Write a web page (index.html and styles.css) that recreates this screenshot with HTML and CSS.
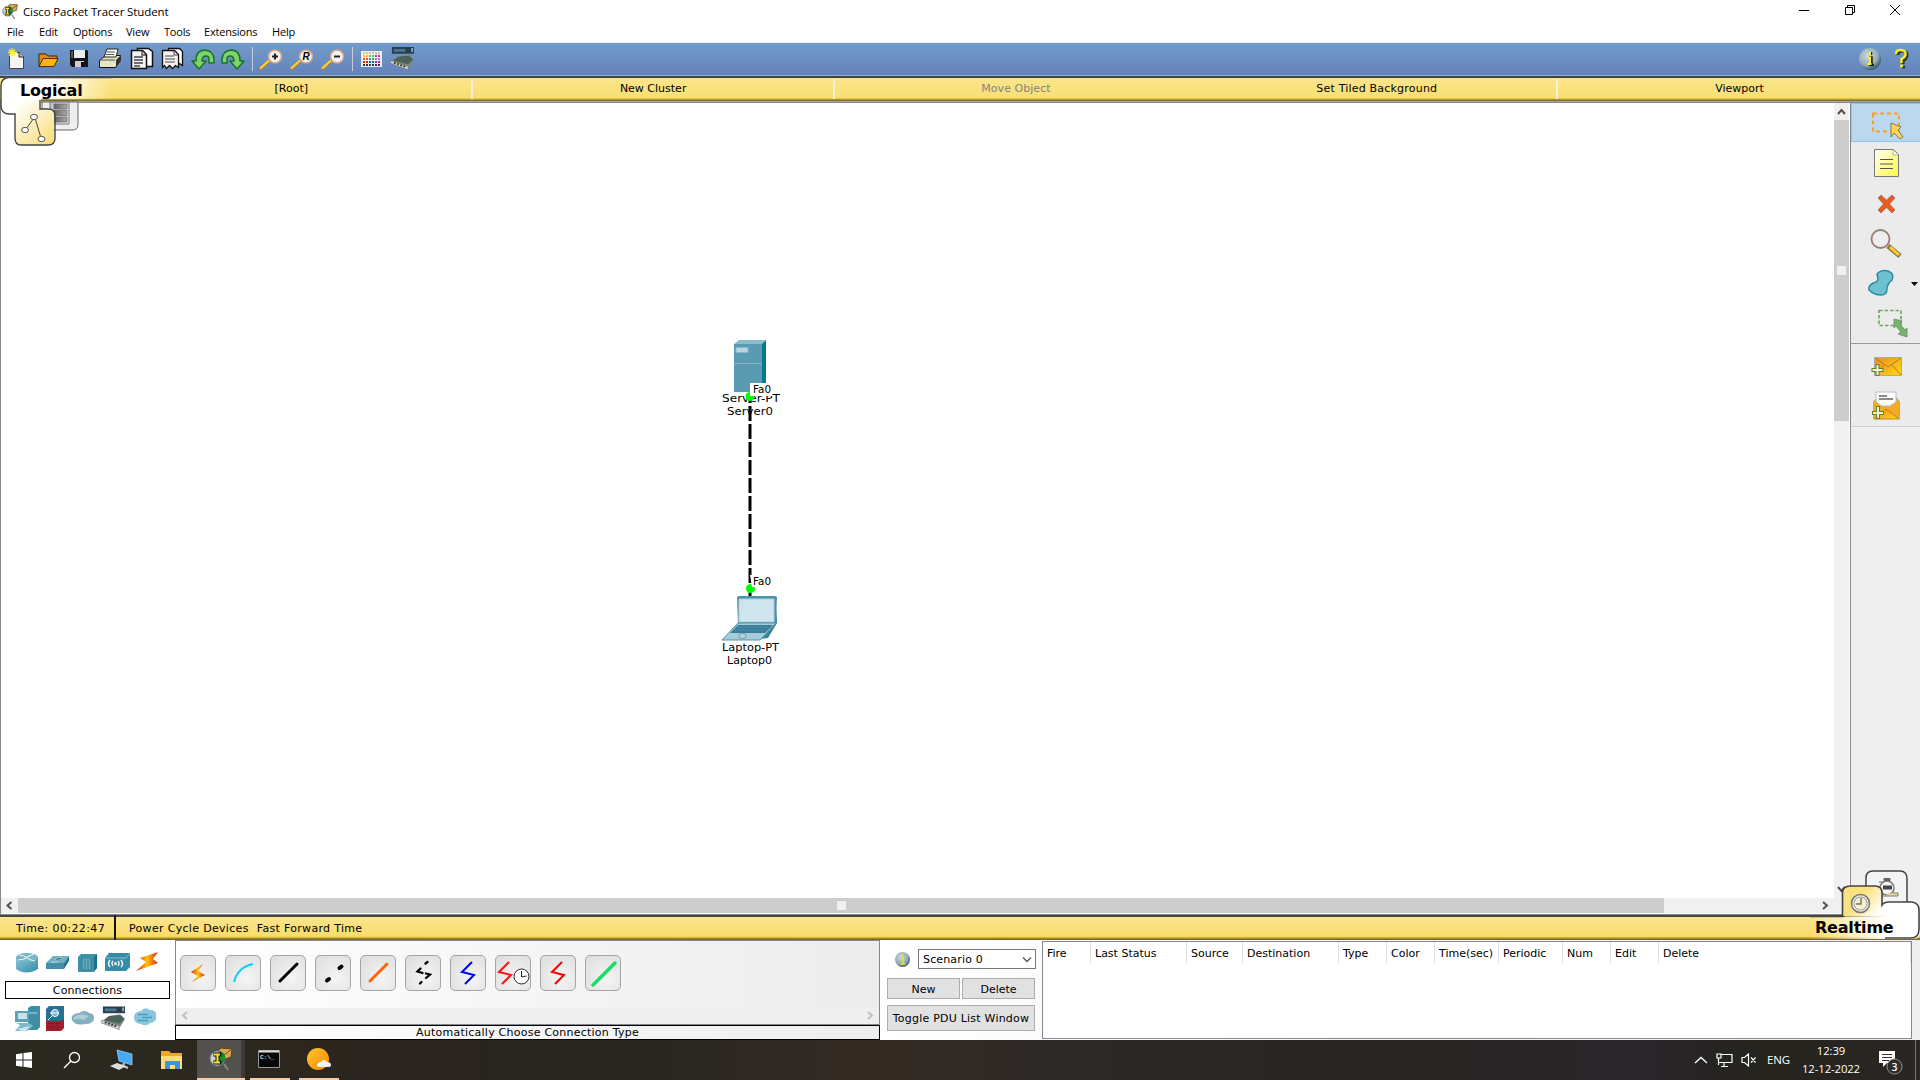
FILE: index.html
```html
<!DOCTYPE html>
<html lang="en">
<head>
<meta charset="utf-8">
<title>Cisco Packet Tracer Student</title>
<link rel="stylesheet" href="styles.css">
</head>
<body>
<svg class="defs" width="0" height="0" aria-hidden="true">
  <defs>
    <linearGradient id="teal" x1="0" y1="0" x2="1" y2="1"><stop offset="0" stop-color="#8fc6d6"/><stop offset="1" stop-color="#2f8ba6"/></linearGradient>
    <linearGradient id="bolt" x1="0" y1="0" x2="1" y2="0"><stop offset="0" stop-color="#d8211a"/><stop offset=".5" stop-color="#ffc400"/><stop offset="1" stop-color="#e02617"/></linearGradient>
    <linearGradient id="gold" x1="0" y1="0" x2="1" y2="1"><stop offset="0" stop-color="#f08c1e"/><stop offset="1" stop-color="#ffd815"/></linearGradient>
    <linearGradient id="paper" x1="0" y1="0" x2="1" y2="1"><stop offset="0" stop-color="#fff"/><stop offset="1" stop-color="#fff93a"/></linearGradient>
    <linearGradient id="tabfade" x1="0" y1="0" x2="1" y2="0"><stop offset="0" stop-color="#fff"/><stop offset=".45" stop-color="#fff"/><stop offset="1" stop-color="#fff" stop-opacity="0"/></linearGradient>
    <linearGradient id="tabcorner" x1="0.2" y1="0" x2="0.9" y2="1"><stop offset="0" stop-color="#fff"/><stop offset=".75" stop-color="#fae79a"/><stop offset="1" stop-color="#f9df76"/></linearGradient>
    <linearGradient id="clockfade" x1="0" y1="0.2" x2="1" y2="0.8"><stop offset="0" stop-color="#f9e27f"/><stop offset=".4" stop-color="#f9e27f"/><stop offset="1" stop-color="#fff"/></linearGradient>
    <linearGradient id="rtfade" x1="0" y1="0" x2="1" y2="0"><stop offset="0" stop-color="#fff" stop-opacity="0"/><stop offset=".7" stop-color="#fff"/></linearGradient>
    <linearGradient id="greyfade" x1="0" y1="0" x2="1" y2="1"><stop offset="0" stop-color="#bdbdbd"/><stop offset="1" stop-color="#eee"/></linearGradient>
    <linearGradient id="rack" x1="0" y1="0" x2="1" y2="0"><stop offset="0" stop-color="#666"/><stop offset="1" stop-color="#aaa"/></linearGradient>
    <radialGradient id="ball" cx=".4" cy=".35" r=".7"><stop offset="0" stop-color="#cdd9de"/><stop offset=".65" stop-color="#94aab4"/><stop offset="1" stop-color="#224a5c"/></radialGradient>
    <linearGradient id="sun" x1="0" y1="0" x2="1" y2="1"><stop offset="0" stop-color="#ffc62c"/><stop offset="1" stop-color="#f98900"/></linearGradient>
    <symbol id="module" viewBox="0 0 26 25"><path d="M2 0h23v7H2z" fill="#293d4c"/><path d="M4 2h12v3H4z" fill="#4a7892"/><path d="M22 1h2v4h-2z" fill="#8ab"/><path d="M8 10l12-2 5 5-5 8-19-5z" fill="#7c8c82"/><path d="M9 10l11-1 4 4-5 5-16-4z" fill="#4b6258"/><path d="M1 14l18 6v4L0 17z" fill="#cdd0cc" stroke="#666" stroke-width=".6"/><path d="M4 16.500l12 4" stroke="#3b3b2d" stroke-width="2" stroke-dasharray="2 1.500"/></symbol>
    <symbol id="undo" viewBox="0 0 31 33"><path d="M5 18h4q0-11 9-11 9 1 9 10v3h-5v-4q0-3-3-3-4 0-4 5h4l-7 8z" fill="#7fd36a" stroke="#157526" stroke-width="1.500" stroke-linejoin="round"/></symbol>
    <symbol id="lens" viewBox="0 0 31 33"><path d="M4 26L13 18" stroke="#b9862f" stroke-width="3.500"/><path d="M4 25.500L13 17.500" stroke="#ffd338" stroke-width="2"/><circle cx="19" cy="13.500" r="6.500" fill="#f2f2f2" stroke="#d8a488" stroke-width="1.600"/></symbol>
    <symbol id="tracer" viewBox="0 0 24 24"><path d="M8 5l4-4 11 1-1 8-8 3z" fill="#d9a64c" stroke="#5d421b"/><path d="M9 4l6 4 8-6" fill="none" stroke="#6f4d1d"/><path d="M15 17l4 6" stroke="#888" stroke-width="2"/><circle cx="8.500" cy="11.500" r="7.500" fill="#c6ceca" stroke="#777"/><path d="M10 4a7 7 0 0 1 4 12l-5 2z" fill="#178a36"/><path d="M4.500 7.500h8M8.500 7v9M4.500 15.500h8" stroke="#111" stroke-width="4"/><path d="M5 7.500h6M8.500 7v9M5 15.500h6" stroke="#ffe51b" stroke-width="2"/></symbol>
  </defs>
</svg>
<div class="window">
  <header class="titlebar">
    <svg class="appicon" width="16" height="17" viewBox="0 0 24 24"><use href="#tracer"/></svg>
    <span class="ui title">Cisco Packet Tracer Student</span>
    <div class="winctl">
      <svg width="12" height="12"><path d="M1 6.500h10" stroke="#000"/></svg>
      <svg width="12" height="12"><path d="M1.500 3.500h7v7h-7zM3.500 3V1.500h7v7H9" fill="none" stroke="#000"/></svg>
      <svg width="12" height="12"><path d="M1 1l10 10M11 1L1 11" stroke="#000"/></svg>
    </div>
  </header>
  <nav class="menu ui">
    <span class="m1">File</span><span class="m2">Edit</span><span class="m3">Options</span><span class="m4">View</span><span class="m5">Tools</span><span class="m6">Extensions</span><span class="m7">Help</span>
  </nav>
  <div class="toolbar">
    <svg viewBox="0 0 31 33"><path d="M8.500 9.500h10l4 4v12h-14z" fill="#f4f4f4" stroke="#444"/><path d="M18 9v5h5" fill="#bbb" stroke="#222"/><path d="M11 5v9M7 9.500h9M8 6.500l6 6M14 6.500l-6 6" stroke="#fff02e" stroke-width="1.300"/></svg>
    <svg viewBox="0 0 31 33"><path d="M7 23V11h7l2 2h9v4" fill="#e58a0e" stroke="#3e2504"/><path d="M7 23.500l4-8h15l-4 8z" fill="#ffb01f" stroke="#4a2d02"/></svg>
    <svg viewBox="0 0 31 33"><path d="M7 7h17l1 1v16H9l-2-2z" fill="#151515"/><path d="M11 7h11v8H11z" fill="#e8edef"/><path d="M12 18h9v6h-9z" fill="#ccd"/><path d="M18 19h3v5h-3z" fill="#111"/><path d="M9 8v7" stroke="#999"/></svg>
    <svg viewBox="0 0 31 33"><path d="M5.500 17.500l6-5h15v5l-5 7h-16z" fill="#e6e6c3" stroke="#111"/><path d="M22 24l5-7v-5l-5 5z" fill="#333"/><path d="M10 14l3-8h11l-2 8z" fill="#fff" stroke="#222"/><path d="M13 9h8M12 11.500h8M5 17h16" stroke="#555"/></svg>
    <svg viewBox="0 0 31 33"><path d="M12.500 5.500h11l4 3v15h-15z" fill="#fff" stroke="#111" stroke-width="1.500"/><path d="M6.500 7.500h11l4 4v14h-15z" fill="#f4f4f4" stroke="#111" stroke-width="1.500"/><path d="M17 8v4h4M9 14h9M9 17h9M9 20h9M9 23h6" fill="none" stroke="#444" stroke-width="1.300"/></svg>
    <svg viewBox="0 0 31 33"><path d="M12.500 5.500h11l3 3v14l-3-2-2 2h-9z" fill="#fff" stroke="#111" stroke-width="1.300"/><path d="M6.500 7.500h12l4 4v13l-3-2-3 3-3-3-3 3-2-3-2 2z" fill="#f4f4f4" stroke="#111" stroke-width="1.300"/><path d="M18 8v4h4M9 13h9M9 16h10M9 19h10" fill="none" stroke="#444"/></svg>
    <svg viewBox="0 0 31 33"><use href="#undo"/></svg>
    <svg viewBox="0 0 31 33"><g transform="translate(31 0) scale(-1 1)"><use href="#undo"/></g></svg>
    <i class="sep"></i>
    <svg viewBox="0 0 31 33"><use href="#lens"/><path d="M16 13.500h6M19 10.500v6" stroke="#222" stroke-width="2"/></svg>
    <svg viewBox="0 0 31 33"><use href="#lens"/><text x="15.600" y="17" font-family="Liberation Sans" font-size="10" font-weight="700" font-style="italic">R</text></svg>
    <svg viewBox="0 0 31 33"><use href="#lens"/><path d="M16 13.500h6" stroke="#222" stroke-width="2"/></svg>
    <i class="sep"></i>
    <svg viewBox="0 0 31 33"><path d="M5 8h21v16H5z" fill="#eee"/><g stroke-width="2" stroke-dasharray="2 1"><path d="M7 10h18" stroke="#d7c8a4"/><path d="M7 13h5" stroke="#efc62f"/><path d="M7 16h5" stroke="#e6623c"/><path d="M7 19h5" stroke="#bb2e2e"/><path d="M7 22h5" stroke="#333"/><path d="M13 13h5" stroke="#71cc45"/><path d="M13 16h5" stroke="#35a5a5"/><path d="M13 19h5" stroke="#3160b7"/><path d="M13 22h5" stroke="#27345b"/><path d="M19 13h6" stroke="#a4d"/><path d="M19 16h6" stroke="#d46ad1"/><path d="M19 19h6" stroke="#863596"/><path d="M19 22h6" stroke="#4a2450"/></g></svg>
    <svg viewBox="0 0 31 33"><use href="#module" x="3" y="4" width="25" height="24"/></svg>
    <div class="help">
      <svg width="24" height="24"><circle cx="12" cy="12" r="11" fill="url(#ball)"/><path d="M13 5v3M11 10.500h2.500v7M11 18h5" stroke="#222" stroke-width="2.500" fill="none"/><path d="M12 5v3M10 10.500h2v7M9.500 17h4" stroke="#f6f22d" stroke-width="2" fill="none"/></svg>
      <svg width="16" height="22"><path d="M4 7q0-4 4-4 6 0 5 5-1 3-4 5v3M8 19h3" stroke="#333" stroke-width="3" fill="none"/><path d="M2 6q0-4 4.500-4 6 0 5 5-1 3-4 4v4M6 18h3" stroke="#f4ee27" stroke-width="2.500" fill="none"/></svg>
    </div>
  </div>
  <div class="navbar v">
    <div class="gap"></div><div class="cell root">[Root]</div><div class="cell">New Cluster</div><div class="cell off">Move Object</div><div class="cell tiled">Set Tiled Background</div><div class="cell last">Viewport</div>
    <svg class="logical" width="112" height="72"><path d="M42 26h36v23q0 5-6 5H42z" fill="#eee" stroke="#666"/><path d="M50 26h19v22H50z" fill="url(#greyfade)" stroke="#777"/><path d="M54 28h13v5H54zM54 34.500h13v5H54zM54 41h13v5H54z" fill="url(#rack)" stroke="#666" stroke-width=".7"/><path d="M1 8q1-6 7-7h104v22H41v9H15v6H7q-5 0-6-6z" fill="url(#tabfade)"/><path d="M15 24h26v9h7q6 0 6 6v23q0 7-6 7H21q-6 0-6-7z" fill="url(#tabcorner)"/><path d="M112 1.500H9Q1 2 1 10v19q0 9 8 9h6v24q0 7 6 7h27q7 0 7-7V39q0-6-7-6h-8v-9" fill="none" stroke="#444" stroke-width="1.400"/><path d="M34 42L26 53M35 42l6 20" stroke="#444"/><g fill="#fff" stroke="#555"><ellipse cx="34" cy="41" rx="3.500" ry="2.700"/><ellipse cx="25" cy="54" rx="3.500" ry="2.700"/><ellipse cx="41.500" cy="63" rx="3.500" ry="2.700"/></g></svg>
    <b class="logicaltext">Logical</b>
  </div>
  <main class="work">
    <section class="canvas">
      <div class="row">
        <div class="sheet">
          <svg class="diagram" width="100" height="360" font-family="Verdana, 'DejaVu Sans', sans-serif" font-size="11">
            <path d="M34 24l5-4h27l-4 4z" fill="#8cbccb"/><path d="M34 24h28v48H34z" fill="#5a9bb1"/><path d="M62 24l4-4v48l-4 4z" fill="#047792"/><path d="M36 27.500h12v5H36z" fill="#b8d5e1" stroke="#8bb8c9"/><path d="M34 43.500h28" stroke="#83b3c4"/>
            <text x="22" y="82" textLength="58" lengthAdjust="spacingAndGlyphs">Server-PT</text><text x="27" y="95" textLength="46" lengthAdjust="spacingAndGlyphs">Server0</text>
            <path d="M50 77v199" stroke="#000" stroke-width="3" stroke-dasharray="15 3" stroke-dashoffset="9"/>
            <circle cx="50" cy="76.500" r="4.500" fill="#0f0"/><path d="M50 63h22v13H50z" fill="#fff"/><text x="53" y="73" font-size="10.500" textLength="18" lengthAdjust="spacingAndGlyphs">Fa0</text>
            <circle cx="50.500" cy="268.500" r="4.500" fill="#0f0"/><path d="M50 255h22v12H52z" fill="#fff"/><text x="53" y="265" font-size="10.500" textLength="18" lengthAdjust="spacingAndGlyphs">Fa0</text>
            <path d="M37 278q0-2 2-2h36q2 0 2 2l-2 25H38z" fill="#4f91a8"/><path d="M76 277l1 26-9 15-7 1 14-16z" fill="#37839c"/><path d="M39 279h35v23H39z" fill="#cee5ee" stroke="#a8cdda"/><path d="M38 303h38l-16 17H22z" fill="#a6ccd8" stroke="#5392a8"/><path d="M38 305h35l-8 8H30z" fill="#397f9a"/><path d="M34 307h34M31 310h34" stroke="#5598ae" stroke-width=".6"/><ellipse cx="42.500" cy="316" rx="3.500" ry="2.500" fill="#b8d6df" stroke="#6e9caa"/>
            <text x="22" y="331" textLength="57" lengthAdjust="spacingAndGlyphs">Laptop-PT</text><text x="27" y="344" textLength="45" lengthAdjust="spacingAndGlyphs">Laptop0</text>
          </svg>
        </div>
        <div class="vscroll"><svg class="up" width="15" height="17"><path d="M4 11l3.500-4 3.500 4" fill="none" stroke="#505050" stroke-width="2"/></svg><div class="vthumb"><i></i></div><svg class="down" width="15" height="17"><path d="M4 6l3.500 4L11 6" fill="none" stroke="#505050" stroke-width="2"/></svg></div>
      </div>
      <div class="hscroll"><svg width="17" height="15"><path d="M10.500 4L6.500 7.500l4 3.500" fill="none" stroke="#505050" stroke-width="2"/></svg><div class="hthumb"><i></i></div><svg class="right" width="17" height="15"><path d="M6 4l4 3.500L6 11" fill="none" stroke="#505050" stroke-width="2"/></svg></div>
    </section>
    <aside class="tools">
      <div class="tool sel"><svg width="67" height="38"><path d="M20 9.500h26v18H20z" fill="none" stroke="#f9a11b" stroke-width="2" stroke-dasharray="4 3"/><path d="M38 19l10 4-3 3 5 7-3 2-6-6-3 4z" fill="#ffd848" stroke="#777"/></svg></div>
      <div class="tool"><svg width="67" height="39"><path d="M22.500 7.500h19l5 5v22h-24z" fill="url(#paper)" stroke="#777"/><path d="M41 8v5h5" fill="#fff" stroke="#aaa"/><path d="M28 17.500h13M28 22h13M28 26.500h13" stroke="#555"/></svg></div>
      <div class="tool"><svg width="67" height="40"><path d="M29 13l5.500 5 5.500-5 3 3-5.500 6 5.500 6-3 3-5.500-5.500L29 31l-3-3 5.500-6-5.500-6z" fill="#ed5b1c" stroke="#aa7b66"/></svg></div>
      <div class="tool"><svg width="67" height="40"><path d="M36 24l12 10" stroke="#8c7543" stroke-width="5"/><path d="M38 25l9 8" stroke="#ffd028" stroke-width="3"/><circle cx="28.500" cy="17" r="9" fill="#ededed" stroke="#987e72" stroke-width="1.800"/></svg></div>
      <div class="tool"><svg width="67" height="40"><path d="M25 11q4-5 11-3 7 3 4 9-5 4-5 9 0 6-6 6-7 0-12-5-1-4 4-7 5-1 5-4z" fill="#6fc1d1" stroke="#2d8ca0" stroke-width="1.500"/><path d="M59 19h7l-3.500 4z"/></svg></div>
      <div class="tool"><svg width="67" height="39"><path d="M27 6.500h22v15H27z" fill="none" stroke="#6baa5d" stroke-width="1.700" stroke-dasharray="3.500 2"/><path d="M42 15l8 2-2 3 5 6 2-2v9l-9-3 3-2-5-6-2 2z" fill="#74b46d" stroke="#789274"/></svg></div>
      <div class="tool line"><svg width="67" height="41"><path d="M22.500 13.500h27v18h-27z" fill="url(#gold)" stroke="#aaa"/><path d="M23 14l13 9 13-9M23 31l9-10M49 31l-9-10" fill="none" stroke="#b07b21"/><path d="M25.500 20v12M19.500 26h12" stroke="#6d7a2a" stroke-width="4"/><path d="M25.500 21v10M20.500 26h10" stroke="#ecf5cc" stroke-width="2"/></svg></div>
      <div class="tool end"><svg width="67" height="41"><path d="M21.500 16.500l6-6h15l5 6v17h-26z" fill="#f4aa22" stroke="#aaa"/><path d="M24 7h20v10l-6 4h-8l-6-4z" fill="#fff" stroke="#bbb"/><path d="M27 11h8M27 14h14" stroke="#888" stroke-width="2"/><path d="M34 24l-12 10h25z" fill="url(#gold)" stroke="#c58326"/><path d="M26 21v13M20 28h12" stroke="#6d7a2a" stroke-width="4"/><path d="M26 22v11M21 28h10" stroke="#ecf5cc" stroke-width="2"/></svg></div>
    </aside>
  </main>
  <div class="timebar v">
    <div class="time">Time: 00:22:47</div><span class="pcd">Power Cycle Devices</span><span class="fft">Fast Forward Time</span>
    <svg class="realtime" width="110" height="70"><path d="M56 45V8q0-7 7-7h27q7 0 7 8v25" fill="#f4f4f4" stroke="#444" stroke-width="1.500"/><circle cx="77" cy="18" r="7" fill="#f4f4f4" stroke="#777" stroke-width="1.500"/><path d="M74 8.500h6v2h-6zM69 12h4" fill="#666" stroke="#666"/><path d="M73 15.500h9v4h-9z" fill="#444"/><path d="M72 26h16v-3h-5" fill="#eee38b" stroke="#777"/><path d="M0 47h35V20q0-4 5-4h26q6 0 6 7v12q2-3 7-3h24q7 0 7 7v21q0 9-7 9H0z" fill="url(#rtfade)"/><path d="M33 46V23q0-7 8-7h24q7 0 7 8v22z" fill="url(#clockfade)"/><path d="M0 46.500h32.500V23q0-7 8-7H65q7 0 7 7v12q2-3 7-3h23q7 1 7 8v19q0 9-8 9H75" fill="none" stroke="#444" stroke-width="1.600"/><circle cx="50.500" cy="33.500" r="9" fill="#eee" stroke="#777" stroke-width="1.500"/><circle cx="50.500" cy="33.500" r="6.500" fill="#f7f0ca" stroke="#999"/><path d="M51 28v6h-5" fill="none" stroke="#777" stroke-width="1.500"/></svg>
    <b class="rttext">Realtime</b>
  </div>
  <section class="bottom v">
    <div class="devices">
      <svg width="160" height="30" viewBox="5 950 160 30"><path d="M16 957v12q10 7 22 0v-12z" fill="url(#teal)"/><ellipse cx="27" cy="957.500" rx="11" ry="4.500" fill="#79b5c7"/><path d="M19 955l5 1 7 4 4 1M34 954l-5 2-5 3-6 1" stroke="#e4f3f7" stroke-width="1.200" fill="none"/><path d="M46 963l7-7h16l-5 7z" fill="#6fafc1"/><path d="M46 963h18v6H46z" fill="#438fa9"/><path d="M64 963l5-7v5l-5 8z" fill="#24748d"/><path d="M54 960l4-2h5M51 962h7" stroke="#d5edf4" stroke-width=".7"/><path d="M78 957l3-3h16v14l-3 4H78z" fill="#3f91aa"/><path d="M82 958h9v12h-9z" fill="#6aafc1" stroke="#2c7c95"/><path d="M85 959v10M88 959v10" stroke="#247890"/><path d="M94 957l3-3v14l-3 3z" fill="#1c7089"/><path d="M105 958l4-5h21v14l-4 4h-21z" fill="#348ca7"/><path d="M105 958h21l4-5" fill="none" stroke="#8bc0ce"/><g fill="none" stroke="#fff" stroke-width="1.300"><path d="M110 960q-3 4 0 7M113 961q-2 2 0 5M118 961q2 2 0 5M121 960q3 4 0 7"/></g><circle cx="115.500" cy="963.500" r="1.500" fill="#fff"/><path d="M158 952l-18 6 6 4-10 9 22-8-5-4z" fill="url(#bolt)"/></svg>
      <div class="category">Connections</div>
      <svg width="160" height="36" viewBox="5 1001 160 36"><path d="M28 1007l3-2h9v21l-3 3h-9z" fill="#3e8fa6"/><path d="M29 1012h8" stroke="#b3d5de"/><path d="M15 1010h14v11H15z" fill="#5ba3b8"/><path d="M18 1012h9v6h-9z" fill="#c9e1e8"/><path d="M16 1022h13l4 3-6 5H15l5-6z" fill="#7cb9ca"/><path d="M17 1028l13-3-5 6z" fill="#d1e6ee"/><path d="M46 1008l3-3h15v19l-3 3H46z" fill="#286e95"/><path d="M46 1020h15l3-2v9l-3 3H46z" fill="#a41e2b"/><path d="M48 1022.500h13M48 1026h13M52 1021v8M57 1021v8" stroke="#7a1a24" stroke-width=".7"/><circle cx="55" cy="1012" r="3.500" fill="#70acd0" stroke="#fff"/><path d="M52 1015l-4 4M50 1012h9" stroke="#fff"/><path d="M72 1019q-2-6 7-7 6-4 10 0 6 1 5 6-1 5-9 5-10 2-13-4z" fill="#82afc1"/><path d="M74 1016q7-5 15-1l-5 4q-6-2-10 0" fill="#accdd9"/><use href="#module" x="101" y="1005" width="25" height="25"/><path d="M134 1016q0-5 7-6 4-5 9-1 7 0 6 6 1 6-6 7-4 4-9 1-7 0-7-7z" fill="#8bc5dc"/><path d="M138 1013.500h10M142 1016.500h10M138 1019.500h10" stroke="#429fc4" stroke-width="1.500"/></svg>
    </div>
    <div class="connections">
      <div class="btnpane">
        <div class="conn"><svg viewBox="0 0 36 36"><path d="M23 9L11 17l7 4-6 6 13-7-7-4z" fill="url(#bolt)"/></svg></div>
        <div class="conn"><svg viewBox="0 0 36 36"><path d="M9 27q4-15 19-18" stroke="#17cbf7" stroke-width="2" fill="none"/></svg></div>
        <div class="conn"><svg viewBox="0 0 36 36"><path d="M10 26L27 9" stroke="#000" stroke-width="3" stroke-linecap="round"/></svg></div>
        <div class="conn"><svg viewBox="0 0 36 36"><path d="M12 25.500l2-1.500M24.500 13l2-1.500" stroke="#000" stroke-width="4" stroke-linecap="round"/></svg></div>
        <div class="conn"><svg viewBox="0 0 36 36"><path d="M10 26L27 9" stroke="#ff6500" stroke-width="3" stroke-linecap="round"/></svg></div>
        <div class="conn"><svg viewBox="0 0 36 36"><path d="M20.500 8.500l2-1.500M15.500 13.500l-3 3 5 1.500M21 18.500l4 1-4 3.500M16.500 27l-1.500 1.500" stroke="#000" stroke-width="2.300" fill="none" stroke-linecap="round"/></svg></div>
        <div class="conn"><svg viewBox="0 0 36 36"><path d="M22 7L12 17l12 3-9 9" stroke="#00f" stroke-width="2" fill="none"/></svg></div>
        <div class="conn"><svg viewBox="0 0 36 36"><path d="M14 7L4 17l12 3-9 9" stroke="#f11" stroke-width="2" fill="none"/><circle cx="26.500" cy="21.500" r="7.500" fill="#fff" stroke="#222"/><path d="M26.500 16v6l5-1" fill="none" stroke="#222"/></svg></div>
        <div class="conn"><svg viewBox="0 0 36 36"><path d="M22 7L12 17l12 3-9 9" stroke="#f00" stroke-width="2" fill="none"/></svg></div>
        <div class="conn"><svg viewBox="0 0 36 36"><path d="M8 30L30 8" stroke="#16df66" stroke-width="3.500" stroke-linecap="round"/></svg></div>
      </div>
      <div class="connscroll"><svg width="17" height="15"><path d="M11 4L7 7.500l4 3.500" fill="none" stroke="#bfbfbf" stroke-width="2"/></svg><svg width="17" height="15"><path d="M6 4l4 3.500L6 11" fill="none" stroke="#bfbfbf" stroke-width="2"/></svg></div>
      <div class="status">Automatically Choose Connection Type</div>
    </div>
    <div class="scenario">
      <div class="sceneline"><svg width="17" height="17"><circle cx="8.500" cy="8.500" r="7.500" fill="url(#ball)"/><path d="M8.500 3v2.500M7 7h2v6M6.500 13h5" stroke="#e5df35" stroke-width="1.700" fill="none"/></svg><div class="combo"><span>Scenario 0</span><svg width="10" height="8"><path d="M1 1.500l4 4 4-4" fill="none" stroke="#555" stroke-width="1.300"/></svg></div></div>
      <div class="pair"><div class="btn">New</div><div class="btn">Delete</div></div>
      <div class="btn toggle">Toggle PDU List Window</div>
    </div>
    <div class="pdulist">
      <span>Fire</span><span>Last Status</span><span>Source</span><span>Destination</span><span>Type</span><span>Color</span><span>Time(sec)</span><span>Periodic</span><span>Num</span><span>Edit</span><span>Delete</span>
    </div>
  </section>
</div>
<footer class="taskbar ui">
  <div class="task"><svg width="16" height="16"><path d="M0 2.200l6.500-1v6.300H0zM7.500 1L16 0v7.500H7.500zM0 8.500h6.500v6.300l-6.500-1zM7.500 8.500H16V16l-8.500-1.200z" fill="#fff"/></svg></div>
  <div class="task"><svg width="18" height="18"><circle cx="11.500" cy="6.500" r="5" fill="none" stroke="#fff" stroke-width="1.300"/><path d="M8 10l-7 7" stroke="#fff" stroke-width="1.500"/></svg></div>
  <div class="task t3"><svg width="24" height="22"><path d="M7 1l15 4v11L9 12z" fill="#44aaf5" stroke="#a4d9ff" stroke-width=".7"/><path d="M14 14l-1 3 5 2" stroke="#ccc" stroke-width="2" fill="none"/><path d="M0 17l7-3 9 3-7 4z" fill="#d7dde0"/></svg></div>
  <div class="task t4"><svg width="22" height="20"><path d="M0 1h8l2 2h11v16H0z" fill="#eaa92a"/><path d="M0 6h21v13H0z" fill="#ffdc75"/><path d="M4 19v-8h15v8h-5v-4H9v4z" fill="#3a94dc"/></svg></div>
  <div class="task active"><svg width="24" height="24"><use href="#tracer"/></svg></div>
  <div class="task run"><svg width="22" height="18"><path d="M.5.500h21v17H.5z" fill="#080808" stroke="#999"/><path d="M1 1.500h20" stroke="#ddd" stroke-width="2"/><text x="2" y="9" font-family="Liberation Mono" font-size="6" font-weight="700" fill="#ddd">C:\_</text></svg></div>
  <div class="task run weather"><svg width="24" height="22"><circle cx="11" cy="11" r="11" fill="url(#sun)"/><path d="M10 18q0-4 4-4 3-4 6 0 4 0 4 3 0 2-3 2h-8q-3 0-3-1z" fill="#f2f2f2"/></svg></div>
  <div class="tray">
    <svg class="chev" width="14" height="8"><path d="M1 7l6-5.500L13 7" fill="none" stroke="#fff" stroke-width="1.300"/></svg>
    <svg class="net" width="17" height="15"><path d="M5 1.500h11v8H3M8 10v3M5 13.500h7M1 1h4v4H1zM2.500 5v7" fill="none" stroke="#fff" stroke-width="1.200"/></svg>
    <svg class="vol" width="16" height="14"><path d="M1 4.500h2.500l4-3.500v12l-4-3.500H1zM10 4.500l4.500 5M14.500 4.500l-4.500 5" fill="none" stroke="#fff" stroke-width="1.200"/></svg>
    <span class="eng">ENG</span>
    <div class="clock"><span>12:39</span><span class="date">12-12-2022</span></div>
    <svg class="note" width="25" height="25"><path d="M0 1h16v12H8l-4 4v-4H0z" fill="#fff"/><path d="M3 4.500h10M3 7.500h10M3 10.500h7" stroke="#333"/><circle cx="15.500" cy="16.500" r="7.500" fill="#302c29" stroke="#929292"/><text x="12.400" y="20.500" fill="#fff" font-family="Open Sans" font-size="10.500" font-weight="600">3</text></svg>
  </div>
</footer>
</body>
</html>
```
FILE: styles.css
```css
* { box-sizing: border-box; }
body { margin: 0; width: 1920px; height: 1080px; overflow: hidden; background: #fff; color: #000; }
svg { display: block; flex: none; }
.defs { position: absolute; }
.v { font: 11px/14px Verdana, "DejaVu Sans", sans-serif; }
.ui { font: 11.5px/16px "Segoe UI", "Open Sans", sans-serif; white-space: nowrap; }
.window { height: 1040px; display: flex; flex-direction: column; }
.titlebar { height: 22px; display: flex; align-items: center; padding-left: 2px; }
.title { margin: 2px 0 0 5px; letter-spacing: -.12px; }
.winctl { margin: -2px 19px 0 auto; display: flex; gap: 33.500px; }
.menu { height: 21px; display: flex; align-items: center; border-bottom: 1px solid #ececec; font-size: 11px; letter-spacing: -.2px; padding: 0 0 0 7px; }
.m1 { width: 32px; } .m2 { width: 34px; } .m3 { width: 53px; } .m4 { width: 38px; } .m5 { width: 40px; } .m6 { width: 68px; }
.toolbar { height: 32px; display: flex; align-items: center; padding-left: 1px; background: linear-gradient(#719bca, #6483bb); }
.toolbar > svg { width: 31px; height: 33px; }
.sep { width: 1px; height: 24px; margin: 0 3px; background: #c5cdd9; }
.help { margin-left: auto; padding-right: 10px; display: flex; align-items: center; gap: 12px; }
.navbar { position: relative; z-index: 2; height: 27px; display: flex; border-top: 1px solid #8db4ce; background: linear-gradient(#45443c 0 2px, #fbe58c 2px, #f9df74 21px, #f7dc50 22px, #d2b23a 23px, #5b5539 25px, #fff 26px); padding-top: 3px; }
.gap { width: 111px; }
.cell { width: 362px; height: 20px; border-right: 2px solid #f3efdc; text-align: center; line-height: 19px; padding-left: 1px; }
.cell.off { letter-spacing: .05px; padding-left: 3px; border-color: transparent; }
.cell.last { border: 0; line-height: 20px; }
.tiled { letter-spacing: .2px; }
.off { color: #858585; }
.logical { position: absolute; left: 0; top: 0; }
.logicaltext { position: absolute; left: 20px; top: 6px; font-size: 16px; line-height: 18px; letter-spacing: -.2px; }
.work { flex: 1; display: flex; min-height: 0; border-top: 1px solid #828790; }
.canvas { width: 1852px; display: flex; flex-direction: column; border: 1px solid #828790; border-top: 0; }
.row { flex: 1; display: flex; min-height: 0; }
.sheet { flex: 1; position: relative; background: #fff; }
.diagram { position: absolute; left: 699px; top: 217px; }
.vscroll { width: 15px; background: #f0f0f0; display: flex; flex-direction: column; margin-right: 1px; }
.vthumb { height: 301px; background: #cdcdcd; display: flex; align-items: center; justify-content: center; }
.vthumb i, .hthumb i { width: 9px; height: 9px; background: #f0f0f0; }
.down { margin-top: auto; }
.hscroll { height: 15px; margin-bottom: 1px; background: #f0f0f0; display: flex; }
.hthumb { width: 1646px; background: #cdcdcd; display: flex; align-items: center; justify-content: center; }
.right { margin-left: 153px; }
.tools { flex: 1; background: #efefef; }
.tool { height: 40px; background: #ebebeb; padding-left: 1px; }
.sel { height: 39px; background: #bcd8ee; border: 1px solid #90c5f0; border-right: 0; }
.tool:nth-child(4), .tool:nth-child(5) { height: 41px; }
.tool:nth-child(6) { height: 39px; }
.line { height: 42px; border-top: 1px solid #999; }
.end { height: 42px; border-bottom: 1px solid #cfcfcf; }
.timebar { position: relative; z-index: 2; height: 25px; display: flex; align-items: center; letter-spacing: .32px; background: linear-gradient(#484844 0 2px, #fbe58c 2px, #f8dd6e 20px, #f3d849 22px, #b4942d 23px, #675b35 25px); }
.time { width: 116px; height: 25px; padding-left: 16px; border-right: 2px solid #111; line-height: 27px; letter-spacing: .4px; }
.pcd { margin: 2px 0 0 13px; } .fft { margin: 2px 0 0 8px; }
.realtime { position: absolute; right: 0; top: -45px; }
.rttext { position: absolute; left: 1815px; top: 4px; font-size: 16px; line-height: 18px; letter-spacing: -.2px; }
.bottom { height: 100px; display: flex; background: linear-gradient(90deg, #fff, #fdfdfd 60%, #eee); }
.devices { width: 175px; padding: 10px 0 0 5px; }
.category { width: 165px; height: 18px; margin: 1px 0 3px; background: #fff; border: 1px solid #000; text-align: center; line-height: 17px; letter-spacing: .12px; }
.connections { width: 705px; display: flex; flex-direction: column; }
.btnpane { height: 68px; display: flex; gap: 9px; padding: 14px 0 0 4px; border: 1px solid #828790; border-bottom: 0; background: linear-gradient(90deg, #fff, #ececec); }
.conn { width: 36px; height: 36px; border: 1px solid #a5a5a5; border-radius: 5px; background: radial-gradient(circle at 60% 65%, #f5f5f5, #dcdcdc); }
.conn svg { width: 36px; height: 36px; margin: -1px; }
.connscroll { height: 17px; display: flex; justify-content: space-between; background: #efefef; border: 1px solid #828790; border-top: 0; }
.status { height: 15px; border: 1px solid #000; text-align: center; line-height: 14px; letter-spacing: .24px; background: linear-gradient(90deg, #fff, #eee); }
.scenario { width: 162px; padding: 9px 6px 0 7px; background: linear-gradient(90deg, #fff, #fbfbfb); }
.sceneline { display: flex; padding-left: 7px; gap: 7px; align-items: center; }
.combo { width: 118px; height: 20px; border: 1px solid #777; display: flex; align-items: center; justify-content: space-between; padding: 2px 3px 0 4px; background: #fff; letter-spacing: .15px; }
.pair { display: flex; gap: 2px; margin: 9px 0 6px; }
.btn { width: 73px; height: 21px; border: 1px solid #adadad; background: #e1e1e1; text-align: center; line-height: 21px; white-space: nowrap; }
.toggle { width: 148px; height: 26px; line-height: 25px; letter-spacing: .22px; }
.pdulist { width: 870px; height: 98px; margin-top: 1px; display: flex; border: 1px solid #828790; background: #fff; }
.pdulist span { height: 21px; padding-left: 4px; border-right: 1px solid #e0e0e0; line-height: 23px; white-space: nowrap; width: 48px; }
.pdulist span:nth-child(2) { width: 96px; }
.pdulist span:nth-child(3) { width: 56px; }
.pdulist span:nth-child(4) { width: 96px; }
.pdulist span:nth-child(7), .pdulist span:nth-child(8) { width: 64px; }
.pdulist span:nth-child(11) { width: 252px; }
.taskbar { height: 40px; display: flex; color: #fff; background: linear-gradient(90deg, #2a2920, #2c261e 15%, #29251e 25%, #272620 32%, #342a23 46%, #2b2827 57%, #292522 70%, #29252a 86%, #25241e 91%, #2a2623); }
.task { width: 48px; display: flex; align-items: center; justify-content: center; }
.t3 { width: 53px; padding-right: 1px; }
.t4 { padding-right: 2px; }
.active { background: linear-gradient(90deg, #53524f 44px, #3b3a37 44px); border-bottom: 2px solid #f6cba8; }
.run { width: 40px; margin-left: 5px; border-bottom: 2px solid #f6cba8; padding-right: 2px; }
.weather { margin-left: 9px; padding: 0; }
.tray { margin-left: auto; width: 222px; display: flex; align-items: center; border-right: 1px solid #77736e; margin-right: 4px; }
.net { margin-left: 8px; } .vol { margin-left: 8px; }
.eng { margin-left: 10px; width: 24px; letter-spacing: -.2px; }
.clock { width: 80px; display: flex; flex-direction: column; align-items: center; line-height: 18px; font-size: 11.3px; letter-spacing: -.1px; }
.note { margin: 5px 0 0 8px; }
```
